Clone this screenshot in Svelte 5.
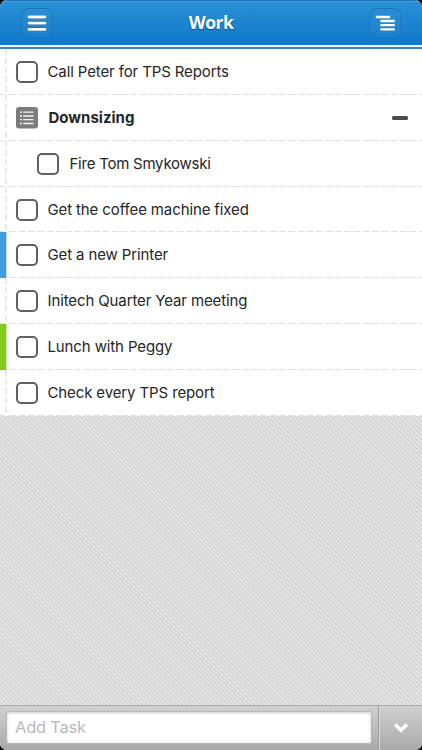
<script lang="ts">
  interface Task {
    title: string;
    kind?: "group" | "child";
    color?: "blue" | "green";
  }

  const tasks: Task[] = [
    { title: "Call Peter for TPS Reports" },
    { title: "Downsizing", kind: "group" },
    { title: "Fire Tom Smykowski", kind: "child" },
    { title: "Get the coffee machine fixed" },
    { title: "Get a new Printer", color: "blue" },
    { title: "Initech Quarter Year meeting" },
    { title: "Lunch with Peggy", color: "green" },
    { title: "Check every TPS report" },
  ];

  let draft = $state("");
</script>

<div class="screen">
  <header class="bar">
    <button class="tool" aria-label="Menu">
      <svg width="32" height="30" viewBox="0 0 32 30">
        <path class="shade" d="M8 9.2h16M8 15.2h16M8 21.2h16" />
        <path class="menu" d="M8 9h16M8 15.2h16M8 21.4h16" />
      </svg>
    </button>
    <h1>Work</h1>
    <button class="tool" aria-label="Outline">
      <svg width="32" height="30" viewBox="0 0 32 30">
        <path class="outline" d="M8 9h12M12.6 13h12M12.6 17.1h12M12.6 21.3h12" />
      </svg>
    </button>
  </header>

  <ul class="tasks">
    {#each tasks as task (task.title)}
      <li class="task {task.kind ?? ''} {task.color ?? ''}">
        <span class="margin"></span>
        {#if task.kind === "group"}
          <svg class="list" width="22" height="22" viewBox="0 0 22 22">
            <rect width="22" height="21.5" rx="3" fill="#7c7c7c" />
            <path d="M4 5.2h2M4 9h2M4 12.7h2M4 16.5h2M7.2 5.2h10.3M7.2 9h10.3M7.2 12.7h10.3M7.2 16.5h10.3" stroke="#f4f4f4" stroke-width="1.3" />
          </svg>
        {:else}
          <span class="check"></span>
        {/if}
        <span class="title">{task.title}</span>
        {#if task.kind === "group"}<span class="collapse"></span>{/if}
      </li>
    {/each}
  </ul>

  <div class="empty"></div>

  <footer class="add">
    <div class="field"><input placeholder="Add Task" bind:value={draft} /></div>
    <button class="more" aria-label="More options">
      <svg width="16" height="12" viewBox="0 0 16 12">
        <path d="M2.2 2.5L8 8.3l5.8-5.8" fill="none" stroke="#fff" stroke-width="3.6" />
      </svg>
    </button>
  </footer>
</div>

<style>
  :global(body) {
    background: #000;
  }
  .screen {
    display: flex;
    flex-direction: column;
    height: 750px;
    overflow: hidden;
    border-radius: 7px;
    background: #fff;
    color: #262626;
    font-family: Inter, "Liberation Sans", sans-serif;
  }
  button {
    padding: 0;
    border: 0;
    background: none;
  }
  svg {
    display: block;
  }
  .bar {
    display: flex;
    align-items: center;
    justify-content: space-between;
    box-sizing: border-box;
    height: 49px;
    padding: 0 21px 3px;
    border-bottom: 2px solid #3b86bd;
    background: linear-gradient(#1c71b0 0 1px, #4ba0d8 1px 2px, #2991d5 2px, #1078ca 45px, #f2fbff 45px);
  }
  .tool {
    box-sizing: border-box;
    width: 32px;
    height: 30px;
    margin-top: 2px;
    border-radius: 7px;
    background: linear-gradient(#2c8fd3, #1c7fcb);
    box-shadow: inset 0 0 0 1px #1b76bb;
  }
  .tool path {
    fill: none;
    stroke: #fff;
    stroke-linecap: round;
    stroke-width: 2.8;
  }
  .tool .shade {
    stroke: #1267a9;
    stroke-width: 3.6;
  }
  .tool .outline {
    stroke-linecap: square;
    stroke-width: 2.3;
  }
  h1 {
    margin: 0;
    color: #fff;
    font: bold 17.5px/26px "Open Sans", sans-serif;
    letter-spacing: -0.5px;
    text-shadow: 0 1px 1px #0a4b80;
  }
  .tasks {
    margin: 0;
    padding: 0.3px 0 0;
    list-style: none;
  }
  .task {
    display: flex;
    align-items: center;
    box-sizing: border-box;
    height: 45.8px;
    background: repeating-linear-gradient(90deg, #e0e0e0 0 7px, #fff 7px 9.3px) 0 100% / 100% 1px no-repeat;
  }
  .margin {
    box-sizing: border-box;
    align-self: stretch;
    width: 7px;
    margin-right: 9px;
    background: repeating-linear-gradient(#e9e9e9 0 6px, #fff 6px 9.16px) 100% 0 / 2px 100% no-repeat;
  }
  .blue .margin {
    background: linear-gradient(90deg, #3f9ddb 6px, #b9dcf2 6px);
  }
  .green .margin {
    background: linear-gradient(90deg, #82cb18 6px, #cfeaa6 6px);
  }
  .check {
    box-sizing: border-box;
    width: 22px;
    height: 22px;
    border: 2px solid #606060;
    border-radius: 5px;
    background: #fff;
  }
  .child .check {
    margin-left: 21px;
  }
  .title {
    margin-left: 9.5px;
    font-size: 15px;
    line-height: 22px;
    letter-spacing: -0.12px;
    white-space: nowrap;
  }
  .child .title {
    margin-left: 10.5px;
    letter-spacing: -0.24px;
  }
  .group .title {
    margin-left: 10.5px;
    font-weight: 700;
    letter-spacing: 0;
  }
  .collapse {
    width: 16px;
    height: 4px;
    margin: 0 14.5px 0 auto;
    border-radius: 1.5px;
    background: #4c4c4c;
  }
  .empty {
    flex: 1;
    background: repeating-linear-gradient(45deg, #e4e4e4 0, #e4e4e4 1.1px, #d1d1d1 2.1px, #d1d1d1 2.4px, #e4e4e4 3.18px);
  }
  .add {
    display: flex;
    box-sizing: border-box;
    height: 45px;
    border-top: 1px solid #a9a9a9;
    background: linear-gradient(#d0d0d0, #a9a9a9);
  }
  .field {
    flex: 1;
    padding: 5px 6px 6px;
  }
  input {
    box-sizing: border-box;
    width: 100%;
    height: 33px;
    padding: 0 8px 2px;
    border: 1px solid #b5b5b5;
    border-radius: 3px;
    outline: 0;
    background: #fff;
    box-shadow: inset 0 1px 3px #ccc;
    font: 16.5px Inter, sans-serif;
    letter-spacing: -0.22px;
  }
  input::placeholder {
    color: #b9b9be;
    opacity: 1;
  }
  .more {
    display: grid;
    place-items: center;
    width: 44px;
    border-left: 1px solid #9e9e9e;
    box-shadow: inset 1px 0 #d6d6d6;
  }
  .more svg {
    margin-bottom: 1px;
  }
</style>
